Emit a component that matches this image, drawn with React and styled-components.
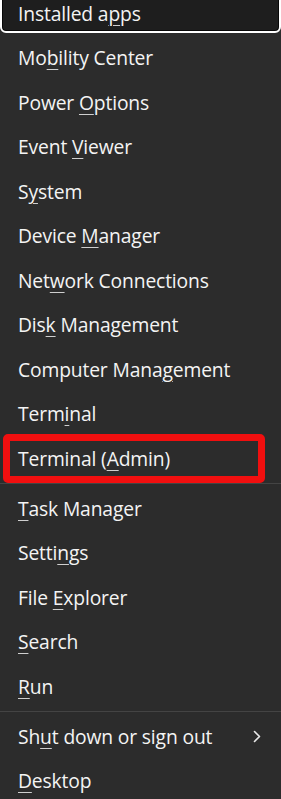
import React, { Fragment } from 'react';
import styled, { createGlobalStyle, css } from 'styled-components';

const GlobalStyle = createGlobalStyle`
html, body {
    margin: 0;
    padding: 0;
    background: #2c2c2c;
    overflow: hidden;
}
`;

const Menu = styled.div`
margin-top: -9.25px;
display: flex;
flex-direction: column;
font-family: "Open Sans", "Noto Sans", sans-serif;
font-size: 19.3px;
color: #f4f4f4;
`;

const focusRing = css`
background: #1e1e1e;
box-shadow: inset 0 0 0 1px #080808;
outline: 2px solid #ffffff;
`;

const Item = styled.div`
position: relative;
height: 36px;
margin: 4.25px 2px;
padding-left: 16px;
padding-right: 18px;
border-radius: 4px;
display: flex;
align-items: center;
justify-content: space-between;
white-space: nowrap;
letter-spacing: -0.15px;
${(p) => p.$focused && focusRing}
`;

const Key = styled.span`
text-decoration: underline;
text-decoration-thickness: 1px;
text-underline-offset: 4px;
text-decoration-color: #cfcfcf;
`;

const Separator = styled.div`
height: 1px;
margin: 2.25px 0;
background: #444444;
`;

// red annotation frame drawn over the screenshot
const RedFrame = styled.div`
position: absolute;
left: 1px;
right: 14px;
top: -6px;
bottom: -7px;
border: 7px solid #f10f0f;
border-radius: 5px;
pointer-events: none;
`;

const Chevron = () => (
    <svg width="8" height="13" viewBox="0 0 8 13">
        <polyline points="1.5,1.5 6.5,6.5 1.5,11.5" fill="none" stroke="#e8e8e8" strokeWidth="1.6" strokeLinecap="round" strokeLinejoin="round" />
    </svg>
);

// [before, key, after]
const groups = [
    [
        { label: ['Installed a', 'p', 'ps'], focused: true },
        { label: ['Mo', 'b', 'ility Center'] },
        { label: ['Power ', 'O', 'ptions'] },
        { label: ['Event ', 'V', 'iewer'] },
        { label: ['S', 'y', 'stem'] },
        { label: ['Device ', 'M', 'anager'] },
        { label: ['Net', 'w', 'ork Connections'] },
        { label: ['Dis', 'k', ' Management'] },
        { label: ['Computer Mana', 'g', 'ement'] },
        { label: ['Term', 'i', 'nal'] },
        { label: ['Terminal (', 'A', 'dmin)'], marked: true },
    ],
    [
        { label: ['', 'T', 'ask Manager'] },
        { label: ['Setti', 'n', 'gs'] },
        { label: ['File ', 'E', 'xplorer'] },
        { label: ['', 'S', 'earch'] },
        { label: ['', 'R', 'un'] },
    ],
    [
        { label: ['Sh', 'u', 't down or sign out'], submenu: true },
        { label: ['', 'D', 'esktop'] },
    ],
];

export default function App() {
    return (
        <Fragment>
            <GlobalStyle />
            <Menu>
                {groups.map((group, g) => (
                    <Fragment key={g}>
                        {g > 0 && <Separator />}
                        {group.map((item, i) => (
                            <Item key={i} $focused={item.focused}>
                                <span>
                                    {item.label[0]}
                                    <Key>{item.label[1]}</Key>
                                    {item.label[2]}
                                </span>
                                {item.submenu && <Chevron />}
                                {item.marked && <RedFrame />}
                            </Item>
                        ))}
                    </Fragment>
                ))}
            </Menu>
        </Fragment>
    );
}
